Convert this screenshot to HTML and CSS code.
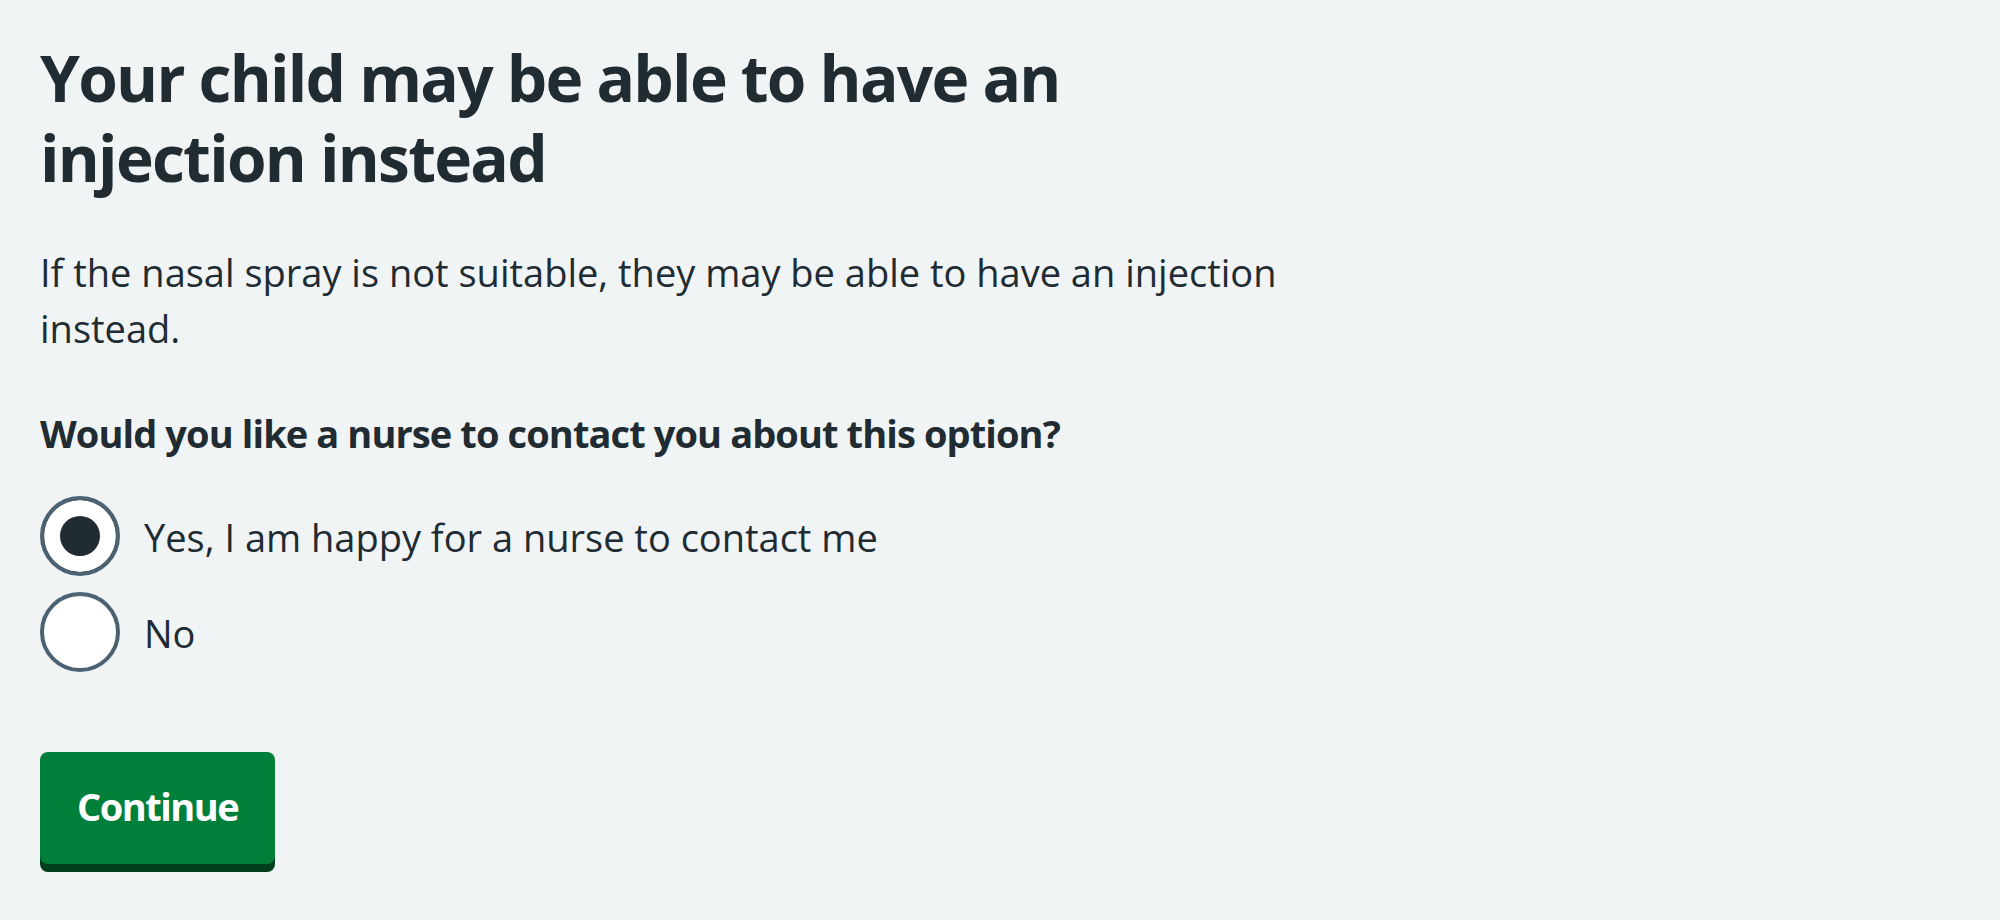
FILE: index.html
```html
<!DOCTYPE html>
<html lang="en">
<head>
<meta charset="utf-8">
<title>Your child may be able to have an injection instead</title>
<link rel="stylesheet" href="styles.css">
</head>
<body>
<main class="page">
  <div class="column">
    <h1 class="heading">Your child may be able to have an injection instead</h1>
    <p class="body-text">If the nasal spray is not suitable, they may be able to have an injection instead.</p>
    <form class="form">
      <fieldset class="fieldset">
        <legend class="legend">Would you like a nurse to contact you about this option?</legend>
        <div class="radios">
          <div class="radio-item">
            <input class="radio-input" type="radio" id="contact-yes" name="contact" value="yes" checked>
            <label class="radio-label" for="contact-yes">Yes, I am happy for a nurse to contact me</label>
          </div>
          <div class="radio-item">
            <input class="radio-input" type="radio" id="contact-no" name="contact" value="no">
            <label class="radio-label" for="contact-no">No</label>
          </div>
        </div>
      </fieldset>
      <button class="button" type="button">Continue</button>
    </form>
  </div>
</main>
</body>
</html>
```
FILE: styles.css
```css
html, body {
  margin: 0;
  padding: 0;
  background: #f0f4f5;
}

body {
  font-family: "Open Sans", "Noto Sans", sans-serif;
  color: #212b32;
}

.page {
  padding: 38px 40px 40px;
}

.column {
  max-width: 1260px;
}

.heading {
  margin: 0 0 46px;
  font-size: 64px;
  line-height: 80px;
  font-weight: 700;
  letter-spacing: -1.75px;
}

.body-text {
  margin: 0 0 49px;
  font-size: 38px;
  line-height: 56px;
  font-weight: 400;
}

.form {
  margin: 0;
}

.fieldset {
  margin: 0;
  padding: 0;
  border: 0;
  min-width: 0;
}

.legend {
  padding: 0;
  font-size: 38px;
  line-height: 56px;
  font-weight: 700;
  letter-spacing: -0.9px;
}

.radios {
  display: flex;
  flex-direction: column;
  gap: 16px;
  padding-top: 35px;
}

.radio-item {
  display: flex;
  align-items: flex-start;
  min-height: 80px;
}

.radio-input {
  appearance: none;
  -webkit-appearance: none;
  flex: none;
  box-sizing: border-box;
  width: 80px;
  height: 80px;
  margin: 0;
  border: 4px solid #4c6272;
  border-radius: 50%;
  background: #ffffff;
}

.radio-input:checked {
  background: #212b32;
  box-shadow: inset 0 0 0 16px #ffffff;
}

.radio-label {
  padding: 13px 24px 8px;
  font-size: 38px;
  line-height: 56px;
  font-weight: 400;
}

.button {
  display: inline-block;
  box-sizing: border-box;
  margin-top: 80px;
  height: 112px;
  padding: 22px 33px 26px;
  border: 4px solid transparent;
  border-radius: 8px;
  background: #007f3b;
  box-shadow: 0 8px 0 #00401e;
  color: #ffffff;
  font-family: "Open Sans", "Noto Sans", sans-serif;
  font-size: 38px;
  line-height: 56px;
  font-weight: 700;
  letter-spacing: -1.5px;
}
```
